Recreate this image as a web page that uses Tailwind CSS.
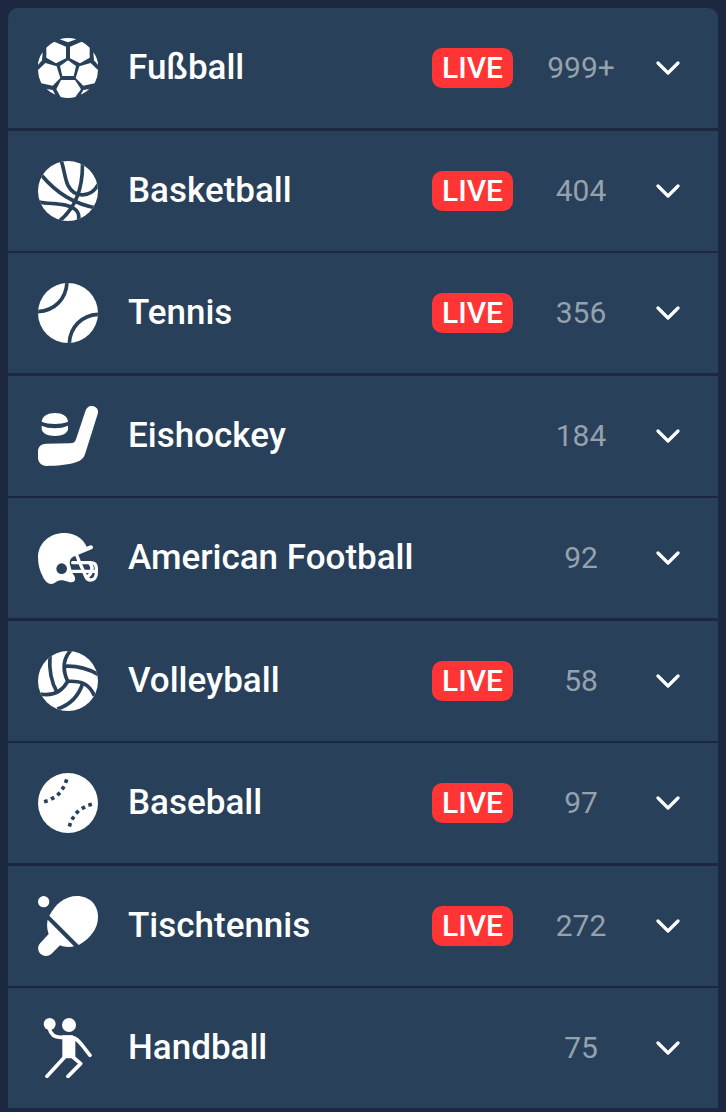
<!DOCTYPE html>
<html lang="de">
<head>
    <meta charset="UTF-8" />
    <meta name="viewport" content="width=device-width, initial-scale=1" />
    <title>Sportarten</title>
    <script src="https://cdn.jsdelivr.net/npm/@tailwindcss/browser@4"></script>
</head>
<body class="min-h-screen bg-[#1b2840] p-2 pb-1 font-['Roboto',sans-serif] text-white">
    <!-- Shared shapes -->
    <svg class="absolute size-0" aria-hidden="true">
        <defs>
            <clipPath id="ball"><circle cx="120" cy="120" r="90" /></clipPath>
            <symbol id="chevron" viewBox="0 0 24 24">
                <path d="M2 7 12 17 22 7" fill="none" stroke="currentColor" stroke-width="3.2" stroke-linecap="round" stroke-linejoin="round" />
            </symbol>
        </defs>
    </svg>

    <ul class="overflow-hidden rounded-t-[10px]">
        <li class="bg-[#284059]">
            <button type="button" aria-expanded="false" class="flex h-30 w-full items-center pr-[38px] pl-[30px] text-left">
                <svg class="size-15 shrink-0" viewBox="30 30 180 180" fill="currentColor" aria-hidden="true">
                    <path d="M95 34Q120 26 145 34L120 43Z" />
                    <path d="M55 59Q66 47 79 41L114 56V91L84 106 55 89Z" />
                    <path d="M185 59Q174 47 161 41L126 56V91L156 106 185 89Z" />
                    <path d="M120 97 144 114 137 144H103L96 114Z" />
                    <path d="M52 105 86 115 97 150 74 173 40 166Q30 146 30 126Z" />
                    <path d="M188 105 154 115 143 150 166 173 200 166Q210 146 210 126Z" />
                    <path d="M99 156H141L159 184 142 207Q120 213 98 207L85 184Z" />
                    <path d="M44 73 42 97 30 111Q31 90 44 73Z" />
                    <path d="M196 73 198 97 210 111Q209 90 196 73Z" />
                    <path d="M56 183 74 186 82 200Q67 194 56 183Z" />
                    <path d="M184 183 166 186 158 200Q173 194 184 183Z" />
                </svg>
                <span class="ml-[30px] flex-1 text-[35px] font-medium">Fußball</span>
                <span class="rounded-[10px] bg-[#ff3434] px-2.5 text-3xl leading-10 font-medium">LIVE</span>
                <span class="ml-5 w-24 text-center text-3xl text-[#96a1ae]">999+</span>
                <svg class="ml-[27px] size-6 shrink-0" aria-hidden="true"><use href="#chevron" /></svg>
            </button>
        </li>
        <li class="mt-[3px] bg-[#284059]">
            <button type="button" aria-expanded="false" class="flex h-30 w-full items-center pr-[38px] pl-[30px] text-left">
                <svg class="size-15 shrink-0" viewBox="30 30 180 180" fill="none" aria-hidden="true">
                    <circle cx="120" cy="120" r="90" fill="currentColor" />
                    <g clip-path="url(#ball)" class="stroke-[#284059]" stroke-width="11">
                        <path d="M40 72C85 125 135 159 210 172" />
                        <path d="M98 25C109 52 109 80 120 103C140 142 188 141 211 100" />
                        <path d="M163 25C166 85 158 159 92 212" />
                        <path d="M28 152C67 161 112 154 139 173C151 181 155 193 151 210" />
                    </g>
                </svg>
                <span class="ml-[30px] flex-1 text-[35px] font-medium">Basketball</span>
                <span class="rounded-[10px] bg-[#ff3434] px-2.5 text-3xl leading-10 font-medium">LIVE</span>
                <span class="ml-5 w-24 text-center text-3xl text-[#96a1ae]">404</span>
                <svg class="ml-[27px] size-6 shrink-0" aria-hidden="true"><use href="#chevron" /></svg>
            </button>
        </li>
        <li class="mt-0.5 bg-[#284059]">
            <button type="button" aria-expanded="false" class="flex h-30 w-full items-center pr-[38px] pl-[30px] text-left">
                <svg class="size-15 shrink-0" viewBox="30 30 180 180" fill="none" aria-hidden="true">
                    <circle cx="120" cy="120" r="90" fill="currentColor" />
                    <g clip-path="url(#ball)" class="stroke-[#284059]" stroke-width="11">
                        <path d="M117 25C116 77 80 115 25 116" />
                        <path d="M124 215C124 163 161 125 215 124" />
                    </g>
                </svg>
                <span class="ml-[30px] flex-1 text-[35px] font-medium">Tennis</span>
                <span class="rounded-[10px] bg-[#ff3434] px-2.5 text-3xl leading-10 font-medium">LIVE</span>
                <span class="ml-5 w-24 text-center text-3xl text-[#96a1ae]">356</span>
                <svg class="ml-[27px] size-6 shrink-0" aria-hidden="true"><use href="#chevron" /></svg>
            </button>
        </li>
        <li class="mt-[3px] bg-[#284059]">
            <button type="button" aria-expanded="false" class="flex h-30 w-full items-center pr-[38px] pl-[30px] text-left">
                <svg class="size-15 shrink-0" viewBox="30 30 180 180" fill="currentColor" aria-hidden="true">
                    <path d="M41 77C42 60 60 51 81 51C102 51 119 60 120 77C98 86 62 86 41 77Z" />
                    <path d="M41 89C62 99 99 99 120 89V100C118 113 102 120 81 120C60 120 43 113 41 100Z" />
                    <path d="M173 43C178 31 188 28 197 31C207 34 213 43 209 54L172 172C167 188 159 194 144 199C119 207 87 210 56 210C40 210 30 200 30 184V167C30 151 40 143 55 143L126 142C136 142 141 139 144 130Z" />
                </svg>
                <span class="ml-[30px] flex-1 text-[35px] font-medium">Eishockey</span>
                <span class="ml-5 w-24 text-center text-3xl text-[#96a1ae]">184</span>
                <svg class="ml-[27px] size-6 shrink-0" aria-hidden="true"><use href="#chevron" /></svg>
            </button>
        </li>
        <li class="mt-0.5 bg-[#284059]">
            <button type="button" aria-expanded="false" class="flex h-30 w-full items-center pr-[38px] pl-[30px] text-left">
                <svg class="size-15 shrink-0" viewBox="30 30 180 180" fill="none" aria-hidden="true">
                    <path d="M30 118C30 76 65 45 109 45C141 45 165 61 176 86L188 82C195 81 198 91 191 94L136 116C126 121 123 131 127 143L133 165C145 178 144 193 130 193C119 193 113 187 99 187C85 187 82 198 70 198C59 198 51 189 45 177C35 159 30 140 30 118Z" fill="currentColor" />
                    <circle cx="101" cy="152" r="16" class="fill-[#284059]" />
                    <g stroke="currentColor" stroke-width="10" stroke-linecap="round" stroke-linejoin="round">
                        <path d="M146 111 155 134 174 177C177 184 182 186 188 186C198 186 205 178 205 165V151C205 140 198 134 187 134H134" />
                        <path d="M132 160H205" />
                        <path d="M186 136C192 143 194 151 191 159C188 169 184 173 178 178" />
                    </g>
                </svg>
                <span class="ml-[30px] flex-1 text-[35px] font-medium">American Football</span>
                <span class="ml-5 w-24 text-center text-3xl text-[#96a1ae]">92</span>
                <svg class="ml-[27px] size-6 shrink-0" aria-hidden="true"><use href="#chevron" /></svg>
            </button>
        </li>
        <li class="mt-[3px] bg-[#284059]">
            <button type="button" aria-expanded="false" class="flex h-30 w-full items-center pr-[38px] pl-[30px] text-left">
                <svg class="size-15 shrink-0" viewBox="30 30 180 180" fill="none" aria-hidden="true">
                    <circle cx="120" cy="120" r="90" fill="currentColor" />
                    <g clip-path="url(#ball)" class="stroke-[#284059]" stroke-width="11">
                        <path d="M131 25C106 51 102 84 119 121C99 157 71 165 37 159" />
                        <path d="M66 42C63 83 67 119 87 153" />
                        <path d="M108 76C150 73 181 83 213 102" />
                        <path d="M119 121C160 119 184 129 199 164" />
                        <path d="M164 127C152 165 124 192 88 204" />
                    </g>
                </svg>
                <span class="ml-[30px] flex-1 text-[35px] font-medium">Volleyball</span>
                <span class="rounded-[10px] bg-[#ff3434] px-2.5 text-3xl leading-10 font-medium">LIVE</span>
                <span class="ml-5 w-24 text-center text-3xl text-[#96a1ae]">58</span>
                <svg class="ml-[27px] size-6 shrink-0" aria-hidden="true"><use href="#chevron" /></svg>
            </button>
        </li>
        <li class="mt-0.5 bg-[#284059]">
            <button type="button" aria-expanded="false" class="flex h-30 w-full items-center pr-[38px] pl-[30px] text-left">
                <svg class="size-15 shrink-0" viewBox="30 30 180 180" fill="none" aria-hidden="true">
                    <circle cx="120" cy="120" r="90" fill="currentColor" />
                    <g class="fill-[#284059]">
                        <rect x="109" y="49" width="11" height="11" transform="rotate(20 114 54)" />
                        <rect x="100" y="69" width="11" height="11" transform="rotate(30 105 74)" />
                        <rect x="87" y="87" width="11" height="11" transform="rotate(45 92 92)" />
                        <rect x="69" y="100" width="11" height="11" transform="rotate(60 74 105)" />
                        <rect x="49" y="109" width="11" height="11" transform="rotate(75 54 114)" />
                        <rect x="180" y="120" width="11" height="11" transform="rotate(75 186 126)" />
                        <rect x="160" y="129" width="11" height="11" transform="rotate(60 166 135)" />
                        <rect x="142" y="142" width="11" height="11" transform="rotate(45 148 148)" />
                        <rect x="129" y="160" width="11" height="11" transform="rotate(30 135 166)" />
                        <rect x="120" y="180" width="11" height="11" transform="rotate(15 126 186)" />
                    </g>
                </svg>
                <span class="ml-[30px] flex-1 text-[35px] font-medium">Baseball</span>
                <span class="rounded-[10px] bg-[#ff3434] px-2.5 text-3xl leading-10 font-medium">LIVE</span>
                <span class="ml-5 w-24 text-center text-3xl text-[#96a1ae]">97</span>
                <svg class="ml-[27px] size-6 shrink-0" aria-hidden="true"><use href="#chevron" /></svg>
            </button>
        </li>
        <li class="mt-[3px] bg-[#284059]">
            <button type="button" aria-expanded="false" class="flex h-30 w-full items-center pr-[38px] pl-[30px] text-left">
                <svg class="size-15 shrink-0" viewBox="30 30 180 180" fill="currentColor" aria-hidden="true">
                    <circle cx="47" cy="47" r="17" />
                    <path d="M64 89C82 54 111 30 147 30C184 30 210 56 210 93C210 129 186 158 152 177Z" />
                    <path d="M59 101 138 181C124 185 107 183 96 178L70 204C61 212 47 212 38 204C28 195 28 180 37 171L62 144C57 130 56 115 59 101Z" />
                </svg>
                <span class="ml-[30px] flex-1 text-[35px] font-medium">Tischtennis</span>
                <span class="rounded-[10px] bg-[#ff3434] px-2.5 text-3xl leading-10 font-medium">LIVE</span>
                <span class="ml-5 w-24 text-center text-3xl text-[#96a1ae]">272</span>
                <svg class="ml-[27px] size-6 shrink-0" aria-hidden="true"><use href="#chevron" /></svg>
            </button>
        </li>
        <li class="mt-0.5 bg-[#284059]">
            <button type="button" aria-expanded="false" class="flex h-30 w-full items-center pr-[38px] pl-[30px] text-left">
                <svg class="size-15 shrink-0" viewBox="30 30 180 180" fill="none" aria-hidden="true">
                    <g fill="currentColor">
                        <circle cx="65" cy="48" r="18" />
                        <circle cx="123" cy="51" r="21" />
                        <path d="M103 82H134L142 93V151H103Z" />
                    </g>
                    <g stroke="currentColor" stroke-width="11" stroke-linecap="round" stroke-linejoin="round">
                        <path d="M64 62C68 79 79 88 98 88H130C144 89 152 99 162 111L186 142" />
                        <path d="M108 149 57 205" />
                        <path d="M136 148 158 167 120 205" />
                    </g>
                </svg>
                <span class="ml-[30px] flex-1 text-[35px] font-medium">Handball</span>
                <span class="ml-5 w-24 text-center text-3xl text-[#96a1ae]">75</span>
                <svg class="ml-[27px] size-6 shrink-0" aria-hidden="true"><use href="#chevron" /></svg>
            </button>
        </li>
    </ul>
</body>
</html>
